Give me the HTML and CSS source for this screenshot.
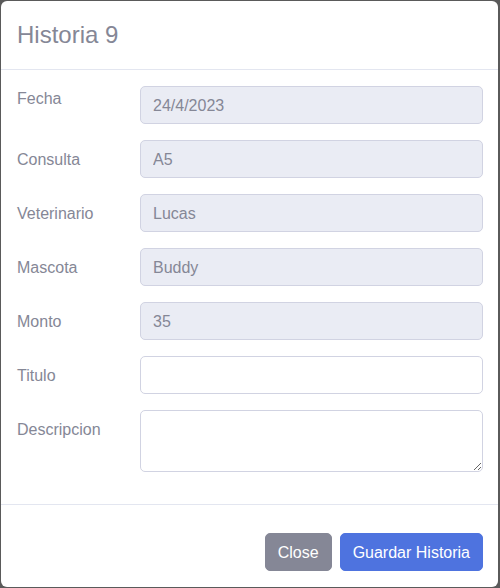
FILE: index.html
```html
<!DOCTYPE html>
<html lang="es">
<head>
<meta charset="utf-8">
<title>Historia 9</title>
<link rel="stylesheet" href="styles.css">
</head>
<body>
<div class="modal">
  <div class="modal-header">
    <h5 class="modal-title">Historia 9</h5>
  </div>
  <form class="modal-body">
    <div class="row">
      <label class="label label-plain">Fecha</label>
      <input class="field" type="text" value="24/4/2023" disabled>
    </div>
    <div class="row">
      <label class="label">Consulta</label>
      <input class="field" type="text" value="A5" disabled>
    </div>
    <div class="row">
      <label class="label">Veterinario</label>
      <input class="field" type="text" value="Lucas" disabled>
    </div>
    <div class="row">
      <label class="label">Mascota</label>
      <input class="field" type="text" value="Buddy" disabled>
    </div>
    <div class="row">
      <label class="label">Monto</label>
      <input class="field" type="text" value="35" disabled>
    </div>
    <div class="row">
      <label class="label">Titulo</label>
      <input class="field" type="text" value="">
    </div>
    <div class="row">
      <label class="label">Descripcion</label>
      <textarea class="field area"></textarea>
    </div>
  </form>
  <div class="modal-footer">
    <button class="btn btn-secondary" type="button">Close</button>
    <button class="btn btn-primary" type="button">Guardar Historia</button>
  </div>
</div>
</body>
</html>
```

FILE: styles.css
```css
* { box-sizing: border-box; }
html, body {
  margin: 0;
  padding: 0;
  height: 588px;
  background: #5a5a5a;
  font-family: "Liberation Sans", Arial, sans-serif;
  color: #858796;
  overflow: hidden;
}
.modal {
  margin: 1px 2px 0 1px;
  width: 497px;
  height: 586px;
  background: #fff;
  border-radius: 6px;
  display: flex;
  flex-direction: column;
}
.modal-header {
  padding: 16px 16px;
  border-bottom: 1px solid #e3e6f0;
}
.modal-title {
  margin: 0;
  font-size: 24px;
  font-weight: 400;
  line-height: 36px;
  color: #858796;
}
.modal-body {
  margin: 0;
  padding: 16px 15px 16px 16px;
  border-bottom: 1px solid #e3e6f0;
}
.row {
  display: grid;
  grid-template-columns: 123px 1fr;
  margin-bottom: 16px;
}
.label {
  font-size: 16px;
  line-height: 24px;
  padding-top: 8px;
  color: #858796;
}
.label-plain { padding-top: 1px; }
.field {
  display: block;
  width: 100%;
  height: 38px;
  padding: 7px 12px 5px;
  font-family: "Liberation Sans", Arial, sans-serif;
  font-size: 16px;
  line-height: 24px;
  color: #6e707e;
  background: #fff;
  border: 1px solid #d1d3e2;
  border-radius: 5px;
  outline: none;
}
.field:disabled {
  background: #eaecf4;
  color: #858796;
  opacity: 1;
}
.area {
  height: 62px;
  resize: vertical;
}
.modal-footer {
  display: flex;
  justify-content: flex-end;
  gap: 8px;
  padding: 28px 15px 16px 16px;
}
.btn {
  height: 38px;
  padding: 7px 12px 5px;
  font-family: "Liberation Sans", Arial, sans-serif;
  font-size: 16px;
  line-height: 24px;
  color: #fff;
  border: 1px solid transparent;
  border-radius: 5px;
}
.btn-secondary { background: #858796; border-color: #858796; }
.btn-primary { background: #4e73df; border-color: #4e73df; }
```
